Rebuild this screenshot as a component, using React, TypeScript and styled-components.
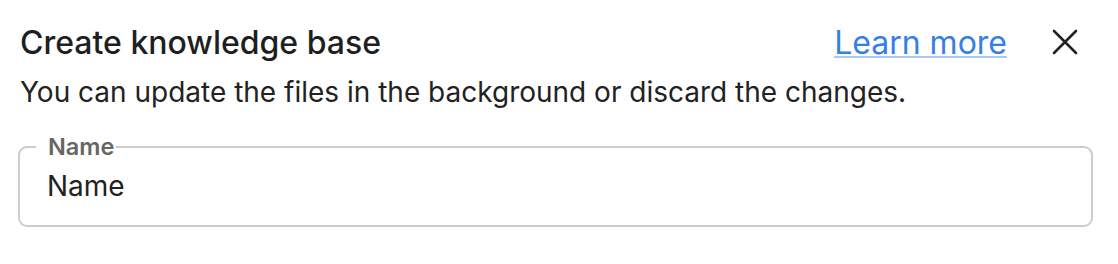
import React from "react";
import styled, { createGlobalStyle } from "styled-components";

const Global = createGlobalStyle`
  html, body { margin: 0; padding: 0; background: #ffffff; }
  body { font-family: Inter, "Noto Sans", sans-serif; color: #1f1f1f; }
`;

const Dialog = styled.div`
  width: 1118px;
  box-sizing: border-box;
  padding: 20px 25px 0 18px;
  display: flex;
  flex-direction: column;
`;

const Header = styled.div`
  display: flex;
  align-items: center;
  justify-content: space-between;
  height: 44px;
  padding-left: 2px;
`;

const Title = styled.h2`
  margin: 0;
  font-size: 32px;
  font-weight: 500;
  color: #1f1f1f;
`;

const Actions = styled.div`
  display: flex;
  align-items: center;
  gap: 45px;
  padding-right: 15px;
`;

const LearnLink = styled.a`
  font-size: 32px;
  color: #3580e4;
  text-decoration: underline;
  text-decoration-color: #a9c9f3;
  text-decoration-thickness: 2px;
  text-underline-offset: 2px;
  cursor: pointer;
`;

const CloseButton = styled.button`
  border: none;
  background: none;
  padding: 0;
  width: 26px;
  height: 26px;
  display: flex;
  align-items: center;
  justify-content: center;
  cursor: pointer;
`;

const Subtitle = styled.p`
  margin: 10px 0 0 2px;
  font-size: 28px;
  color: #222;
  line-height: 36px;
`;

const Field = styled.fieldset`
  margin: 26px 0 0 0;
  padding: 11px 0 22px 27px;
  border: 2px solid #cccccc;
  border-radius: 9px;
  display: flex;
  align-items: center;
`;

const Legend = styled.legend`
  font-family: Inter, "Noto Sans", sans-serif;
  font-weight: 600;
  font-size: 23.5px;
  color: #666666;
  padding: 0 2px 0 12px;
  margin-left: -11px;
  line-height: 22px;
`;

const Input = styled.input`
  border: none;
  outline: none;
  background: transparent;
  font-family: Inter, "Noto Sans", sans-serif;
  font-size: 28px;
  line-height: 34px;
  height: 34px;
  color: #222;
  padding: 0;
  margin: 0;
  width: 100%;
`;

export default function App() {
  return (
    <>
      <Global />
      <Dialog>
        <Header>
          <Title>Create knowledge base</Title>
          <Actions>
            <LearnLink>Learn more</LearnLink>
            <CloseButton aria-label="Close">
              <svg width="26" height="26" viewBox="0 0 26 26">
                <path d="M2 2 L24 24 M24 2 L2 24" stroke="#222" strokeWidth="2.6" strokeLinecap="round" fill="none" />
              </svg>
            </CloseButton>
          </Actions>
        </Header>
        <Subtitle>You can update the files in the background or discard the changes.</Subtitle>
        <Field>
          <Legend>Name</Legend>
          <Input defaultValue="Name" />
        </Field>
      </Dialog>
    </>
  );
}
